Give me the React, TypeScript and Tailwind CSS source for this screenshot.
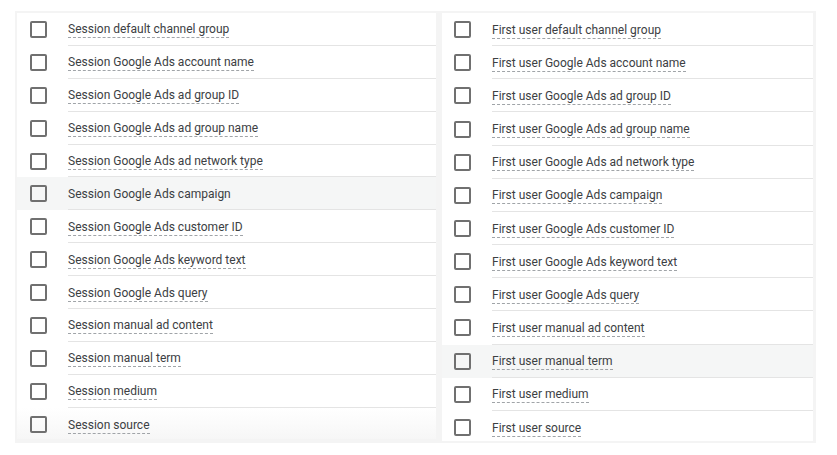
import React from "react";

const left = [
  "Session default channel group",
  "Session Google Ads account name",
  "Session Google Ads ad group ID",
  "Session Google Ads ad group name",
  "Session Google Ads ad network type",
  "Session Google Ads campaign",
  "Session Google Ads customer ID",
  "Session Google Ads keyword text",
  "Session Google Ads query",
  "Session manual ad content",
  "Session manual term",
  "Session medium",
  "Session source",
];

const right = [
  "First user default channel group",
  "First user Google Ads account name",
  "First user Google Ads ad group ID",
  "First user Google Ads ad group name",
  "First user Google Ads ad network type",
  "First user Google Ads campaign",
  "First user Google Ads customer ID",
  "First user Google Ads keyword text",
  "First user Google Ads query",
  "First user manual ad content",
  "First user manual term",
  "First user medium",
  "First user source",
];

function Row({
  label,
  hover,
  underline,
  last,
  side,
}: {
  label: string;
  hover: boolean;
  underline: boolean;
  last: boolean;
  side: "l" | "r";
}) {
  const bg = hover
    ? "bg-[#f5f6f6]"
    : last && side === "l"
    ? "bg-gradient-to-b from-white to-[#f6f6f6]"
    : "bg-white";
  return (
    <div
      className={
        "flex items-stretch shrink-0 " +
        (side === "l" ? "h-[32.9px] pl-[13px] " : "h-[33.17px] pl-[12px] ") +
        bg
      }
    >
      <div className="flex items-center w-[38px] shrink-0">
        <div className="w-[17px] h-[17px] border-2 border-[#707070] rounded-[2px] bg-transparent" />
      </div>
      <div
        className={
          "flex-1 flex items-center pt-[3px] " +
          (last ? "" : "border-b border-[#e4e4e4]")
        }
      >
        <span
          className={
            "text-[12px] leading-[15px] text-[#3c4043] " +
            (underline ? "border-b border-dashed border-[#a0a4a8]" : "border-b border-transparent")
          }
          style={{ fontFamily: "Roboto, 'Liberation Sans', sans-serif" }}
        >
          {label}
        </span>
      </div>
    </div>
  );
}

export default function App() {
  return (
    <div className="w-[837px] h-[455px] bg-white pt-[11px] pl-[15px]">
      <div className="w-[801px] h-[432px] bg-[#f4f4f4] p-[2px] flex gap-[6px]">
        <div className="w-[419px] h-[426px] bg-white overflow-hidden flex flex-col">
          {left.map((l, i) => (
            <Row
              key={l}
              label={l}
              hover={i === 5}
              underline={i !== 5}
              last={i === left.length - 1}
              side="l"
            />
          ))}
        </div>
        <div className="w-[371px] h-[428px] bg-white overflow-hidden flex flex-col">
          {right.map((l, i) => (
            <Row
              key={l}
              label={l}
              hover={i === 10}
              underline={true}
              last={i === right.length - 1}
              side="r"
            />
          ))}
        </div>
      </div>
    </div>
  );
}
